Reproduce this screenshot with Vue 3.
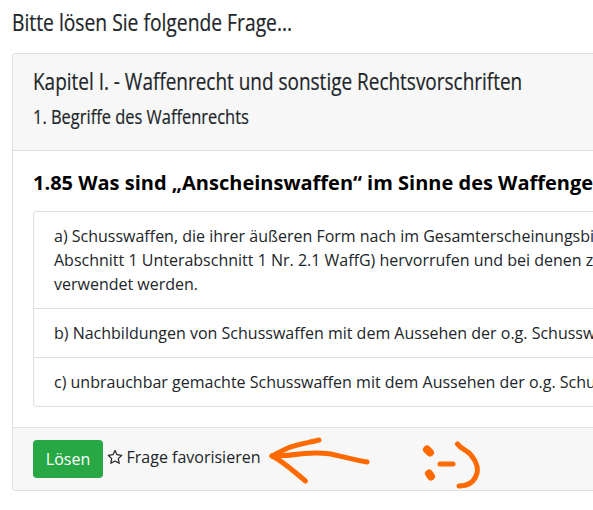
<script setup>
const answers = [
  'a) Schusswaffen, die ihrer äußeren Form nach im Gesamterscheinungsbi\nAbschnitt 1 Unterabschnitt 1 Nr. 2.1 WaffG) hervorrufen und bei denen z\nverwendet werden.',
  'b) Nachbildungen von Schusswaffen mit dem Aussehen der o.g. Schussw',
  'c) unbrauchbar gemachte Schusswaffen mit dem Aussehen der o.g. Schu',
]
</script>

<template>
  <main class="page">
    <h1 class="title"><span class="narrow n1">Bitte lösen Sie folgende Frage...</span></h1>
    <section class="card">
      <header class="head">
        <h2 class="chapter"><span class="narrow n2">Kapitel I. - Waffenrecht und sonstige Rechtsvorschriften</span></h2>
        <h3 class="topic"><span class="narrow n3">1. Begriffe des Waffenrechts</span></h3>
      </header>
      <div class="body">
        <h4 class="question">1.85 Was sind „Anscheinswaffen“ im Sinne des Waffenge</h4>
        <ul class="answers">
          <li v-for="a in answers" :key="a">{{ a }}</li>
        </ul>
      </div>
      <footer class="foot">
        <button class="solve">Lösen</button>
        <span class="fav">
          <svg class="star" viewBox="0 0 16 16"><path d="M8 1.4 10 5.7 14.8 6.3 11.3 9.6 12.2 14.3 8 12 3.8 14.3 4.7 9.6 1.2 6.3 6 5.7Z" /></svg>
          <span>Frage favorisieren</span>
        </span>
        <svg class="doodle" viewBox="260 428 240 62">
          <path d="M319 440C307 443 295 445 288 448C281 451 276 454 272 456C284 456 294 455 304 453.500C315 452.500 324 453 331 454C344 457 356 460 367 462" />
          <path d="M272 456C284 462 292 470 305.500 481" />
          <path d="M440 464H453" />
          <path d="M457.500 444C461 449 467 450 471 455C477 462 479 470 476 476C473 483 467 486 459 486" />
          <path class="dot" d="M427 449.500 430 452.500M429 473.500 431 476.500" />
        </svg>
      </footer>
    </section>
  </main>
</template>

<style>
body { overflow: hidden; background: #fff; }
</style>

<style scoped>
* { box-sizing: border-box; }
h1, h2, h3, h4, ul { margin: 0; padding: 0; font-weight: 400; }
.page {
  width: 100%;
  height: 510px;
  overflow: hidden;
  padding: 7px 0 0 12px;
  color: #212529;
  font: 16px/24px "Open Sans", sans-serif;
}
.narrow { display: inline-block; white-space: nowrap; transform-origin: 0 50%; -webkit-text-stroke: 0.2px #212529; }
.title { height: 46px; font-size: 24px; line-height: 29px; }
.card { height: 438px; border: 1px solid #dfdfdf; border-right: 0; border-radius: 4px 0 0 4px; overflow: hidden; }
.head { height: 97px; padding: 12px 20px; background: #f7f7f7; border-bottom: 1px solid #dfdfdf; }
.chapter { height: 39px; font-size: 24px; line-height: 29px; }
.topic { font-size: 20px; line-height: 24px; }
.n1 { transform: scaleX(0.803); }
.n2 { transform: scaleX(0.79); }
.n3 { transform: scaleX(0.822); }
.body { height: 276px; padding: 20px 0 20px 20px; }
.question { height: 40px; font-size: 20px; line-height: 24px; font-weight: 700; color: #000; white-space: nowrap; }
.answers { list-style: none; border: 1px solid #dfdfdf; border-right: 0; border-radius: 4px 0 0 4px; }
.answers li { padding: 12px 0 12px 20px; white-space: pre; }
.answers li + li { border-top: 1px solid #dfdfdf; }
.foot {
  position: relative;
  height: 63px;
  display: flex;
  gap: 4px;
  padding: 12px 20px;
  background: #f7f7f7;
  border-top: 1px solid #dfdfdf;
}
.solve {
  width: 70px;
  height: 38px;
  padding: 0;
  border: 0;
  border-radius: 4px;
  color: #fff;
  background: #28a745;
  font: 16px/38px "Open Sans", sans-serif;
}
.fav { display: flex; gap: 3.5px; padding-top: 5px; height: 29px; }
.star { width: 16px; height: 16px; margin-top: 4px; fill: none; stroke: #212529; stroke-width: 1.2; stroke-linejoin: round; }
.doodle { position: absolute; left: 247px; top: 0; width: 240px; height: 62px; fill: none; stroke: #ff6a00; stroke-width: 5; stroke-linecap: round; stroke-linejoin: round; }
.doodle .dot { stroke-width: 8; }
</style>
